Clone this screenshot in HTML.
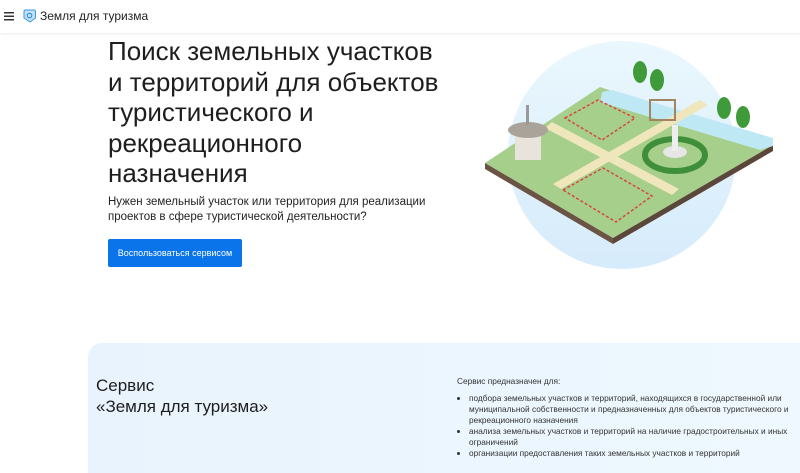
<!DOCTYPE html>
<html><head><meta charset="utf-8"><style>
body{margin:0;width:800px;height:459px;overflow:hidden;background:#fff;font-family:"Liberation Sans",sans-serif;color:#222;position:relative}
.hdr{position:absolute;left:0;top:0;width:800px;height:33px;box-shadow:0 1px 3px rgba(0,0,0,.08);background:#fff}
h1{position:absolute;left:108px;top:36px;margin:0;font-size:26px;line-height:30.5px;font-weight:400;color:#1e1e1e;white-space:nowrap}
.sub{position:absolute;left:108px;top:195px;font-size:11.5px;line-height:15px;color:#222;width:320px}
.btn{position:absolute;left:108px;top:239px;width:134px;height:28px;background:#0a74ea;color:#fff;font-size:9px;line-height:28px;text-align:center;border-radius:2px}
.sec{position:absolute;left:88px;top:343px;width:712px;height:130px;border-top-left-radius:14px;background:linear-gradient(90deg,#e9f3fd,#eef8fe)}
.t2{position:absolute;left:96px;top:375px;font-size:17px;line-height:21px;color:#1e1e1e}
.r{position:absolute;left:457px;top:376px;font-size:8.3px;line-height:11px;color:#333;width:340px}
ul{margin:6px 0 0;padding-left:12px}
li{margin:0}
</style></head><body>
<div class="hdr">
<svg style="position:absolute;left:4px;top:12px" width="10" height="9"><rect y="0" width="10" height="1.5" fill="#333"/><rect y="3.5" width="10" height="1.5" fill="#333"/><rect y="7" width="10" height="1.5" fill="#333"/></svg>
<svg style="position:absolute;left:23px;top:9px" width="13" height="14" viewBox="0 0 13 14"><path d="M2 1h9a1.5 1.5 0 0 1 1.5 1.5V9L7 13 1 9V2.5A1.5 1.5 0 0 1 2 1z" fill="#bfe0f8" stroke="#3a9ae0" stroke-width="1"/><circle cx="6.5" cy="6.5" r="2.3" fill="none" stroke="#2a7fd0" stroke-width="1"/></svg>
<div style="position:absolute;left:40px;top:9px;font-size:12px;color:#222">Земля для туризма</div>
</div>
<h1>Поиск земельных участков<br>и территорий для объектов<br>туристического и<br>рекреационного<br>назначения</h1>
<div class="sub">Нужен земельный участок или территория для реализации проектов в сфере туристической деятельности?</div>
<div class="btn">Воспользоваться сервисом</div>
<svg style="position:absolute;left:470px;top:30px" width="320" height="250" viewBox="470 30 320 250">
<defs><linearGradient id="g" x1="0" y1="0" x2="0" y2="1"><stop offset="0" stop-color="#eaf7fd"/><stop offset="1" stop-color="#d6ebfb"/></linearGradient></defs>
<circle cx="622" cy="155" r="114" fill="url(#g)"/>
<polygon points="485,163 600,87 773,145 613,238" fill="#a7cf8c"/>
<polygon points="485,163 613,238 613,244 485,169" fill="#6b5444"/>
<polygon points="613,238 773,145 773,151 613,244" fill="#5b463a"/>
<polygon points="602,92 612,90 773,138 773,146 760,150 600,102" fill="#bfe8f5"/>
<polygon points="545,128 552,122 679,189 672,195" fill="#efe6bb"/>
<polygon points="553,184 561,189 708,105 700,100" fill="#efe6bb"/>
<polygon points="565,118 598,100 635,118 602,140" fill="none" stroke="#d9463e" stroke-dasharray="3,2" stroke-width="1.5"/>
<polygon points="563,190 603,168 652,196 616,222" fill="none" stroke="#d9463e" stroke-dasharray="3,2" stroke-width="1.5"/>
<ellipse cx="675" cy="155" rx="30" ry="16" fill="none" stroke="#3f8f3a" stroke-width="6"/>
<ellipse cx="675" cy="152" rx="12" ry="6" fill="#e6e6e6"/><rect x="672" y="125" width="6" height="26" fill="#eee"/>
<ellipse cx="640" cy="72" rx="7" ry="11" fill="#3f9a3a"/><ellipse cx="657" cy="80" rx="7" ry="11" fill="#3f9a3a"/>
<ellipse cx="724" cy="108" rx="7" ry="11" fill="#3f9a3a"/><ellipse cx="743" cy="117" rx="7" ry="11" fill="#3f9a3a"/>
<rect x="515" y="130" width="26" height="30" fill="#e8e4dc"/><ellipse cx="528" cy="130" rx="20" ry="8" fill="#a9a39a"/><rect x="526" y="105" width="3" height="20" fill="#999"/>
<rect x="650" y="100" width="25" height="20" fill="none" stroke="#a28560" stroke-width="2"/>
</svg>
<div class="sec"></div>
<div class="t2">Сервис<br>«Земля для туризма»</div>
<div class="r">Сервис предназначен для:
<ul><li>подбора земельных участков и территорий, находящихся в государственной или муниципальной собственности и предназначенных для объектов туристического и рекреационного назначения</li><li>анализа земельных участков и территорий на наличие градостроительных и иных ограничений</li><li>организации предоставления таких земельных участков и территорий</li></ul></div>
</body></html>
